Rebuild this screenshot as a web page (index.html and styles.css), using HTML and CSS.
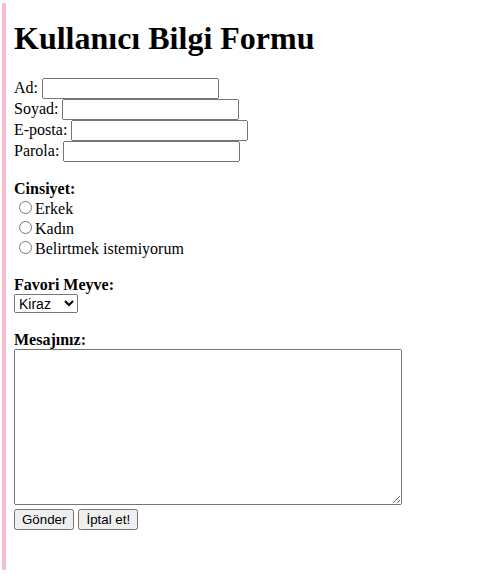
FILE: index.html
```html
<!DOCTYPE html>
<html lang="tr">
<head>
<meta charset="utf-8">
<title>Kullanıcı Bilgi Formu</title>
<link rel="stylesheet" href="styles.css">
</head>
<body class="page">
<h1 class="title">Kullanıcı Bilgi Formu</h1>
<form class="form">
<label for="ad">Ad:</label> <input class="field" type="text" id="ad"><br>
<label for="soyad">Soyad:</label> <input class="field" type="text" id="soyad"><br>
<label for="eposta">E-posta:</label> <input class="field" type="email" id="eposta"><br>
<label for="parola">Parola:</label> <input class="field" type="password" id="parola"><br>
<br>
<b>Cinsiyet:</b><br>
<input class="radio" type="radio" name="cinsiyet" id="erkek"><label for="erkek">Erkek</label><br>
<input class="radio" type="radio" name="cinsiyet" id="kadin"><label for="kadin">Kadın</label><br>
<input class="radio" type="radio" name="cinsiyet" id="belirtme"><label for="belirtme">Belirtmek istemiyorum</label><br>
<br>
<b>Favori Meyve:</b><br>
<select class="select">
<option>Kiraz</option>
<option>Elma</option>
<option>Armut</option>
<option>Muz</option>
</select><br>
<br>
<b>Mesajınız:</b><br>
<textarea class="message"></textarea><br>
<button class="btn" type="submit">Gönder</button>
<button class="btn" type="reset">İptal et!</button>
</form>
</body>
</html>
```
FILE: styles.css
```css
html {
  background: #fff;
}
.page {
  margin: 3px 0 0 2px;
  padding: 2px 8px 0 8px;
  border-left: 4px solid #f8bbd0;
  min-height: 567px;
  box-sizing: border-box;
  font-family: "Liberation Serif", "Times New Roman", serif;
  font-size: 16px;
  color: #000;
}
.title {
  font-size: 32px;
  font-weight: bold;
  margin: 15px 0 21px 0;
}
.form {
  margin: 0;
}
.field {
  font-family: "Liberation Sans", Arial, sans-serif;
  font-size: 13.333px;
  width: 177px;
  height: 21px;
  box-sizing: border-box;
}
.select {
  font-family: "Liberation Sans", Arial, sans-serif;
  font-size: 14px;
  width: 64px;
  height: 19px;
  box-sizing: border-box;
}
.message {
  width: 388px;
  height: 156px;
  box-sizing: border-box;
}
.btn {
  font-family: "Liberation Sans", Arial, sans-serif;
  font-size: 13.333px;
  height: 21px;
  box-sizing: border-box;
}
```
